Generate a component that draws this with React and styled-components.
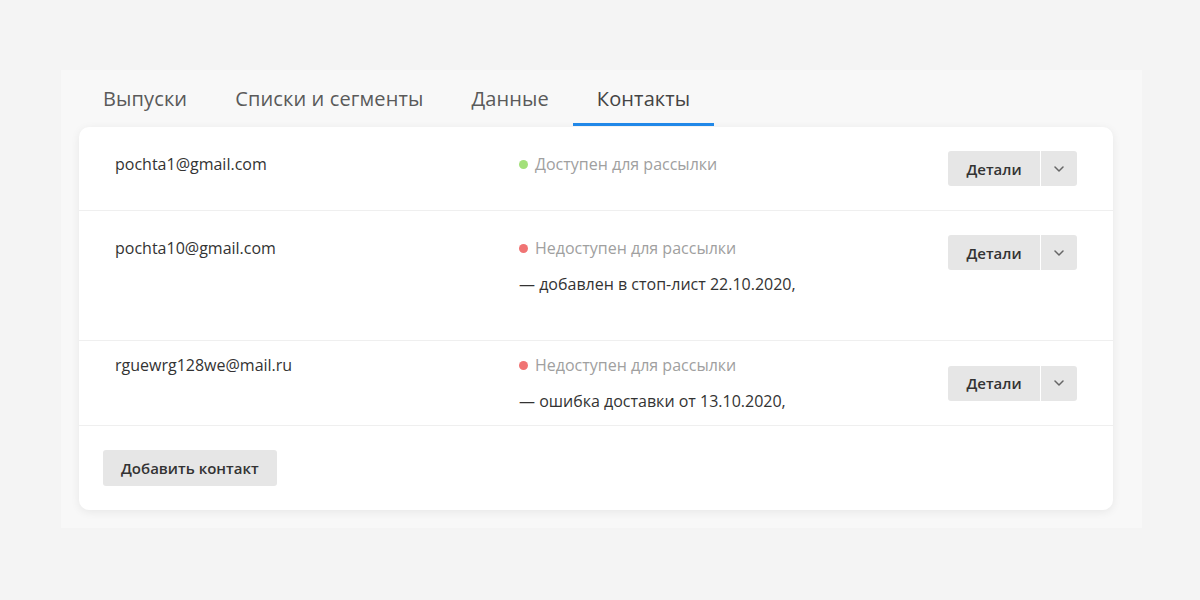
import React from "react";
import styled, { createGlobalStyle } from "styled-components";

const GlobalStyle = createGlobalStyle`
	html, body {
		margin: 0;
		padding: 0;
		background: #f4f4f4;
		font-family: "Open Sans", "Noto Sans", sans-serif;
	}
	* { box-sizing: border-box; }
`;

const contacts = [
	{ email: "pochta1@gmail.com", ok: true, layout: "top" },
	{ email: "pochta10@gmail.com", ok: false, note: "— добавлен в стоп-лист 22.10.2020,", layout: "tall" },
	{ email: "rguewrg128we@mail.ru", ok: false, note: "— ошибка доставки от 13.10.2020,", layout: "center" },
];

const tabs = ["Выпуски", "Списки и сегменты", "Данные", "Контакты"];

export default function App() {
	return (
		<>
			<GlobalStyle />
			<Page>
				<Panel>
					<Tabs>
						{tabs.map((t) => (
							<Tab key={t} $active={t === "Контакты"}>{t}</Tab>
						))}
					</Tabs>
					<Card>
						{contacts.map((c) => (
							<Row key={c.email} $layout={c.layout}>
								<Email $layout={c.layout}>{c.email}</Email>
								<StatusCol $layout={c.layout}>
									<Status>
										<Dot $ok={c.ok} />
										{c.ok ? "Доступен для рассылки" : "Недоступен для рассылки"}
									</Status>
									{c.note && <Note>{c.note}</Note>}
								</StatusCol>
								<SplitButton>
									<Btn>Детали</Btn>
									<Caret aria-label='ещё'>
										<svg width='10' height='6' viewBox='0 0 10 6' fill='none'>
											<path d='M1 1l4 4 4-4' stroke='#666' strokeWidth='1.5' strokeLinecap='round' strokeLinejoin='round' />
										</svg>
									</Caret>
								</SplitButton>
							</Row>
						))}
						<Footer>
							<AddButton>Добавить контакт</AddButton>
						</Footer>
					</Card>
				</Panel>
			</Page>
		</>
	);
}

const Page = styled.div`
	width: 1200px;
	height: 600px;
	padding: 70px 58px 0 61px;
`;

const Panel = styled.section`
	background: #f8f8f8;
	padding: 0 29px 18px 18px;
	width: 1081px;
`;

const Tabs = styled.nav`
	display: flex;
	height: 57px;
`;

const Tab = styled.div`
	padding: 15px 24px 0;
	font-size: 20px;
	letter-spacing: 0.12px;
	line-height: 28px;
	color: ${(p) => (p.$active ? "#444" : "#5a5a5a")};
	border-bottom: 3px solid ${(p) => (p.$active ? "#2188e8" : "transparent")};
	height: 56px;
	white-space: nowrap;
`;

const Card = styled.div`
	background: #fff;
	border-radius: 10px;
	box-shadow: 0 2px 10px rgba(0, 0, 0, 0.07);
`;

const Row = styled.div`
	display: flex;
	align-items: ${(p) => (p.$layout === "center" ? "center" : "flex-start")};
	padding: ${(p) => (p.$layout === "center" ? "14px 36px" : "24px 36px")};
	min-height: ${(p) => (p.$layout === "tall" ? "130px" : "auto")};
	border-bottom: 1px solid #efefef;
	font-size: 16px;
	line-height: 20px;
`;

const Email = styled.div`
	width: 404px;
	flex-shrink: 0;
	color: #333;
	padding-top: ${(p) => (p.$layout === "center" ? "0" : "3px")};
	align-self: flex-start;
`;

const StatusCol = styled.div`
	flex: 1;
	display: flex;
	flex-direction: column;
	gap: 16px;
	padding-top: ${(p) => (p.$layout === "center" ? "0" : "3px")};
`;

const Status = styled.div`
	display: flex;
	align-items: center;
	gap: 7px;
	color: #a0a0a0;
`;

const Dot = styled.span`
	width: 9px;
	height: 9px;
	border-radius: 50%;
	background: ${(p) => (p.$ok ? "#a3e07a" : "#f07474")};
`;

const Note = styled.div`
	color: #333;
`;

const SplitButton = styled.div`
	display: flex;
	gap: 1px;
	flex-shrink: 0;
`;

const Btn = styled.button`
	height: 35px;
	padding: 0 18px;
	border: 0;
	border-radius: 3px 0 0 3px;
	background: #e6e6e6;
	font-family: inherit;
	font-size: 15px;
	font-weight: 600;
	color: #333;
	width: 92px;
`;

const Caret = styled.button`
	width: 36px;
	height: 35px;
	border: 0;
	border-radius: 0 3px 3px 0;
	background: #e6e6e6;
	display: flex;
	align-items: center;
	justify-content: center;
	padding: 0;
`;

const Footer = styled.div`
	padding: 24px;
`;

const AddButton = styled(Btn)`
	width: auto;
	height: 36px;
	border-radius: 3px;
`;
